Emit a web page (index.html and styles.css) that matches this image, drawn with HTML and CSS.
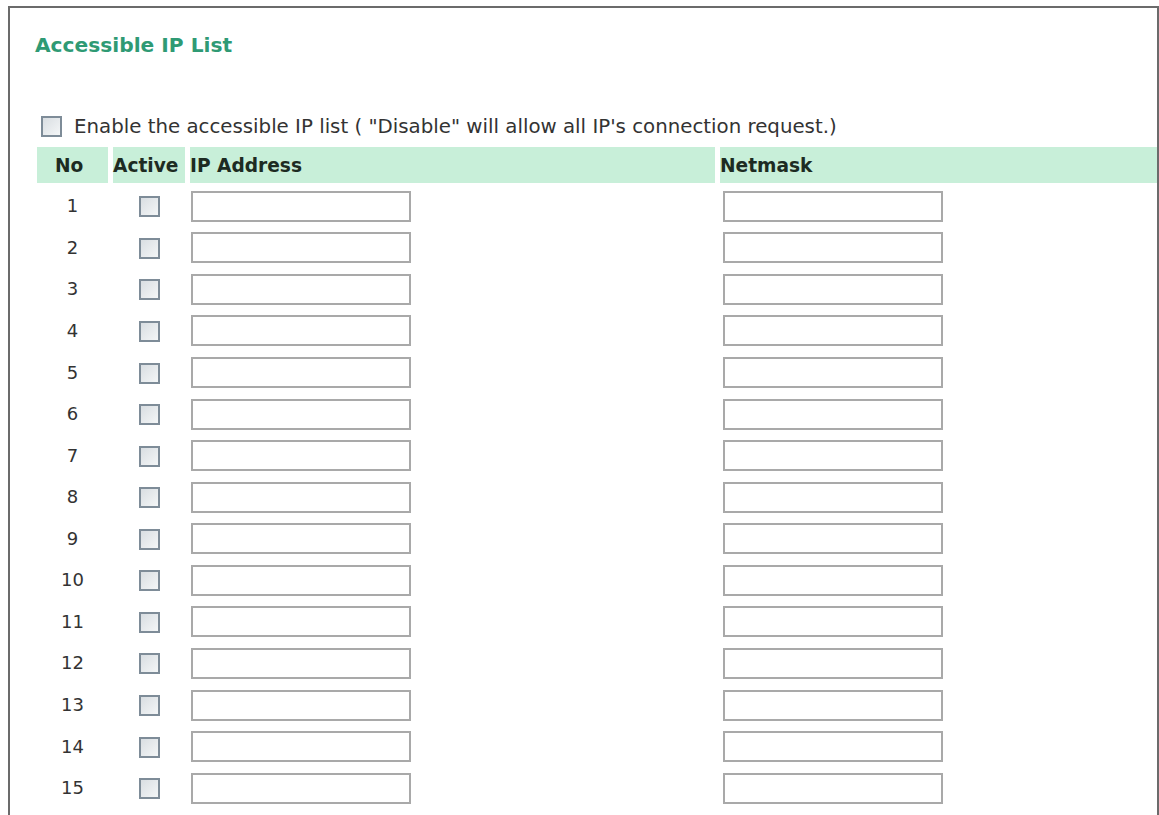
FILE: index.html
```html
<!DOCTYPE html>
<html lang="en">
<head>
  <meta charset="UTF-8" />
  <title>Accessible IP List</title>
  <link rel="stylesheet" href="styles.css">
</head>
<body>

  <div class="panel">
    <h2 class="panel-title">Accessible IP List</h2>

    <label class="enable-row">
      <input type="checkbox" class="box" id="enableList" />
      <span>Enable the accessible IP list ( "Disable" will allow all IP's connection request.)</span>
    </label>

    <table class="ip-table">
      <thead>
        <tr>
          <th class="col-no">No</th>
          <th class="col-active">Active</th>
          <th class="col-ip">IP Address</th>
          <th class="col-mask">Netmask</th>
        </tr>
      </thead>
      <tbody id="ipRows"></tbody>
    </table>
  </div>

  <script>
    const rows = document.getElementById("ipRows");

    for (let i = 1; i <= 15; i++) {
      const tr = document.createElement("tr");
      tr.innerHTML =
        `<td class="col-no">${i}</td>` +
        `<td class="col-active"><input type="checkbox" class="box" /></td>` +
        `<td class="col-ip"><input type="text" class="field" /></td>` +
        `<td class="col-mask"><input type="text" class="field" /></td>`;
      rows.appendChild(tr);
    }
  </script>

</body>
</html>
```

FILE: styles.css
```css
body {
  margin: 0;
  height: 815px;
  overflow: hidden;
  background: #fff;
  font-family: "DejaVu Sans", Verdana, sans-serif;
  color: #333;
}

.panel {
  margin: 6px 0 0 8px;
  border: 2px solid #6b6b6b;
  border-bottom: none;
  padding: 25px 0 0 22px;
  min-height: 900px;
}

.panel-title {
  margin: 0 0 0 3px;
  font-size: 20.2px;
  line-height: 24px;
  color: #2f9a74;
}

.enable-row {
  display: flex;
  align-items: center;
  gap: 12px;
  margin: 58px 0 0 9px;
  height: 22px;
  font-size: 19.8px;
}

.box {
  appearance: none;
  display: block;
  margin: 0;
  width: 21px;
  height: 21px;
  border: 2px solid #7e8c98;
  background: linear-gradient(135deg, #d9dee2, #f4f6f7);
  box-sizing: border-box;
  flex: none;
}

.ip-table {
  border-collapse: separate;
  border-spacing: 5px 0;
  margin-top: 10px;
  width: calc(100% + 5px);
}

.ip-table th {
  height: 36px;
  padding: 0;
  background: #c8efd9;
  color: #1d2b22;
  font-size: 18.6px;
  text-align: left;
  vertical-align: middle;
}

/* rows are 41.57px tall: 5px top padding + 36.57px content */
.ip-table td {
  height: 36.57px;
  padding: 5px 0 0;
  font-size: 18px;
  line-height: 20px;
  vertical-align: middle;
}

.col-no {
  width: 71px;
}

th.col-no {
  padding-left: 18px !important;
  width: 53px;
}

td.col-no {
  text-align: center;
}

.col-active {
  width: 72px;
}

td.col-active .box {
  margin: 1px auto 0;
}

.col-ip {
  width: 525px;
}

.field {
  display: block;
  margin: 0 0 0 1px;
  width: 220px;
  height: 31px;
  box-sizing: border-box;
  border: 2px solid #a9a9a9;
  background: #fff;
}

.col-mask .field {
  margin-left: 3px;
}
```
